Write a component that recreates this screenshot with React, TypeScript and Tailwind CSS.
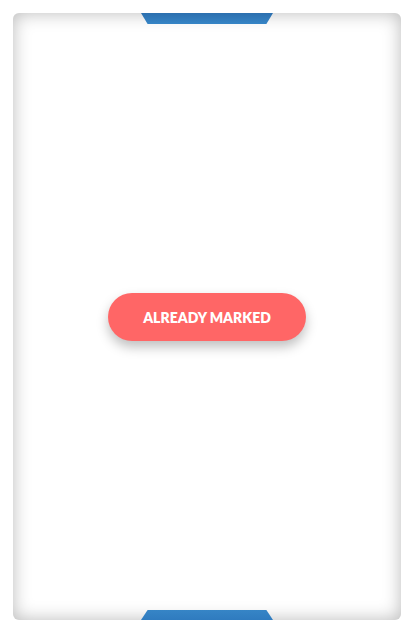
const App: React.FC = () => {
  return (
    <div className="w-[414px] h-[633px] bg-white p-[13px] pb-[13px]">
      <div className="relative h-[607px] w-[388px] rounded-[6px] bg-white shadow-[inset_0_0_18px_rgba(0,0,0,0.28)] flex items-center justify-center">
        {/* top tab */}
        <div className="absolute top-0 left-[128px] w-[132px] h-[11px] bg-gradient-to-b from-[#2c6fae] to-[#3685c6] [clip-path:polygon(0_0,100%_0,95%_100%,5%_100%)]" />
        <button className="w-[198px] h-[48px] mt-[1px] rounded-full bg-[#ff6666] text-white font-['Lato',sans-serif] font-extrabold text-[14px] tracking-normal shadow-[0_6px_12px_rgba(0,0,0,0.25)]">
          ALREADY MARKED
        </button>
        {/* bottom tab */}
        <div className="absolute bottom-0 left-[128px] w-[132px] h-[10px] bg-gradient-to-b from-[#3685c6] to-[#2f7bbf] [clip-path:polygon(5%_0,95%_0,100%_100%,0_100%)]" />
      </div>
    </div>
  );
};

export default App;
